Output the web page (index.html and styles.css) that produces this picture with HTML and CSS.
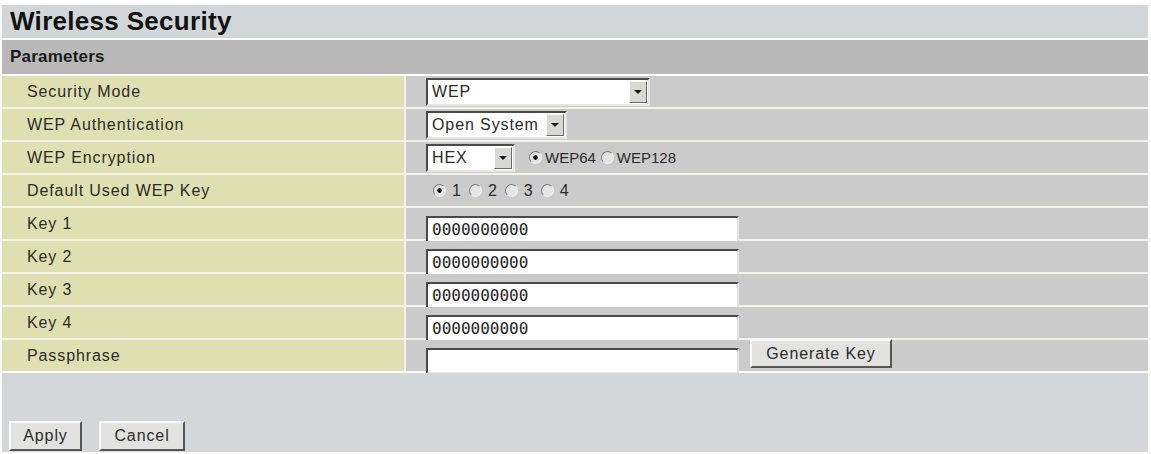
FILE: index.html
```html
<!DOCTYPE html>
<html lang="en">
<head>
    <meta charset="UTF-8">
    <title>Wireless Security</title>
    <link rel="stylesheet" href="styles.css">
</head>
<body>
    <div class="page">
        <h1 class="title">Wireless Security</h1>
        <div class="section">Parameters</div>

        <div class="params">
            <div class="label">Security Mode</div>
            <div class="value">
                <span class="select select-mode"><span class="sel-text">WEP</span><span class="drop"></span></span>
            </div>

            <div class="label">WEP Authentication</div>
            <div class="value">
                <span class="select select-auth"><span class="sel-text">Open System</span><span class="drop"></span></span>
            </div>

            <div class="label">WEP Encryption</div>
            <div class="value">
                <span class="select select-enc"><span class="sel-text">HEX</span><span class="drop"></span></span>
                <label class="radio"><input type="radio" name="bits" checked>WEP64</label>
                <label class="radio"><input type="radio" name="bits">WEP128</label>
            </div>

            <div class="label">Default Used WEP Key</div>
            <div class="value">
                <label class="radio small"><input type="radio" name="defkey" checked>1</label>
                <label class="radio small"><input type="radio" name="defkey">2</label>
                <label class="radio small"><input type="radio" name="defkey">3</label>
                <label class="radio small"><input type="radio" name="defkey">4</label>
            </div>

            <div class="label">Key 1</div>
            <div class="value"><input class="text key" type="text" value="0000000000"></div>

            <div class="label">Key 2</div>
            <div class="value"><input class="text key" type="text" value="0000000000"></div>

            <div class="label">Key 3</div>
            <div class="value"><input class="text key" type="text" value="0000000000"></div>

            <div class="label">Key 4</div>
            <div class="value"><input class="text key" type="text" value="0000000000"></div>

            <div class="label">Passphrase</div>
            <div class="value">
                <input class="text pass" type="text" value="">
                <button class="btn btn-gen">Generate Key</button>
            </div>
        </div>

        <div class="footer">
            <button class="btn btn-apply">Apply</button>
            <button class="btn btn-cancel">Cancel</button>
        </div>
    </div>
</body>
</html>
```

FILE: styles.css
```css
*{box-sizing: border-box;}
body{
    margin: 0;
    background: #fff;
    font-family: "Liberation Sans", Arial, sans-serif;
    color: #222;
}
.page{
    width: 1146px;
    margin-left: 2px;
    padding-top: 5px;
    display: flex;
    flex-direction: column;
    gap: 2px;
}

/* header bars */
.title{
    margin: 0;
    height: 33px;
    padding-left: 8px;
    display: flex;
    align-items: center;
    background: #d3d6d9;
    font-size: 26px;
    font-weight: bold;
    letter-spacing: 0.3px;
    color: #111;
}
.section{
    height: 34px;
    padding-left: 8px;
    display: flex;
    align-items: center;
    background: #b9b9b9;
    font-size: 17px;
    font-weight: bold;
    letter-spacing: 0.2px;
    color: #1a1a1a;
}

/* form rows */
.params{
    display: grid;
    grid-template-columns: 402px 1fr;
    grid-auto-rows: 31px;
    gap: 2px;
    background: #f3f3ee;
}
.label{
    background: #dfe0b2;
    padding-left: 25px;
    display: flex;
    align-items: center;
    font-size: 16px;
    letter-spacing: 0.9px;
    color: #2b2b2b;
}
.value{
    background: #cbcbcb;
    padding-left: 20px;
    display: flex;
    align-items: center;
    font-size: 16px;
    letter-spacing: 0.9px;
    color: #2b2b2b;
}

/* drop-down boxes */
.select{
    height: 28px;
    display: flex;
    align-items: stretch;
    background: #fff;
    border: 2px solid;
    border-color: #4a4a4a #e6e6e6 #e6e6e6 #4a4a4a;
}
.select .sel-text{
    flex: 1;
    padding-left: 4px;
    display: flex;
    align-items: center;
}
.select .drop{
    width: 18px;
    margin: 1px;
    background: #d8d8d4;
    border: 1px solid;
    border-color: #fafafa #6a6a6a #6a6a6a #fafafa;
    position: relative;
}
.select .drop::after{
    content: "";
    position: absolute;
    left: 4px;
    top: 8px;
    border-left: 4px solid transparent;
    border-right: 4px solid transparent;
    border-top: 4px solid #111;
}
.select-mode{width: 224px;}
.select-auth{width: 141px;}
.select-enc{width: 89px;}

/* radio buttons */
.radio{
    display: flex;
    align-items: center;
    margin-left: 14px;
    font-size: 15px;
    letter-spacing: 0;
}
.radio + .radio{margin-left: 5px;}
.radio input{
    appearance: none;
    width: 13px;
    height: 13px;
    margin: 0 3px 0 0;
    border-radius: 50%;
    border: 1px solid;
    border-color: #7a7a7a #f2f2f2 #f2f2f2 #7a7a7a;
    background: #e4e4e4;
}
.radio input:checked{
    background: radial-gradient(circle, #111 0 2px, #e4e4e4 2.5px);
}
.radio.small{margin-left: 0; margin-right: 8px; font-size: 16px;}
.radio.small input{margin-right: 6px;}
.radio.small:first-child{margin-left: 7px;}

/* text fields */
.text{
    width: 313px;
    height: 28px;
    padding: 0 4px;
    background: #fff;
    border: 2px solid;
    border-color: #4a4a4a #e6e6e6 #e6e6e6 #4a4a4a;
    font-family: "DejaVu Sans Mono", monospace;
    font-size: 16px;
    letter-spacing: 0;
    color: #222;
    outline: none;
}
.text.key{margin-top: 12px;}
.text.pass{height: 26px; margin-top: 10px;}

/* buttons */
.btn{
    height: 29px;
    padding: 0;
    background: #e2e2e0;
    border: 2px solid;
    border-color: #fafafa #555 #555 #fafafa;
    font-family: "Liberation Sans", Arial, sans-serif;
    font-size: 16px;
    letter-spacing: 0.9px;
    color: #2b2b2b;
}
.btn-gen{width: 142px; margin-left: 11px; margin-top: -4px;}
.btn-apply{width: 73px;}
.btn-cancel{width: 86px;}

.footer{
    height: 79px;
    background: #d4d6d9;
    padding: 48px 0 0 7px;
    display: flex;
    align-items: flex-start;
    gap: 17px;
}
.footer .btn{height: 30px;}
```
